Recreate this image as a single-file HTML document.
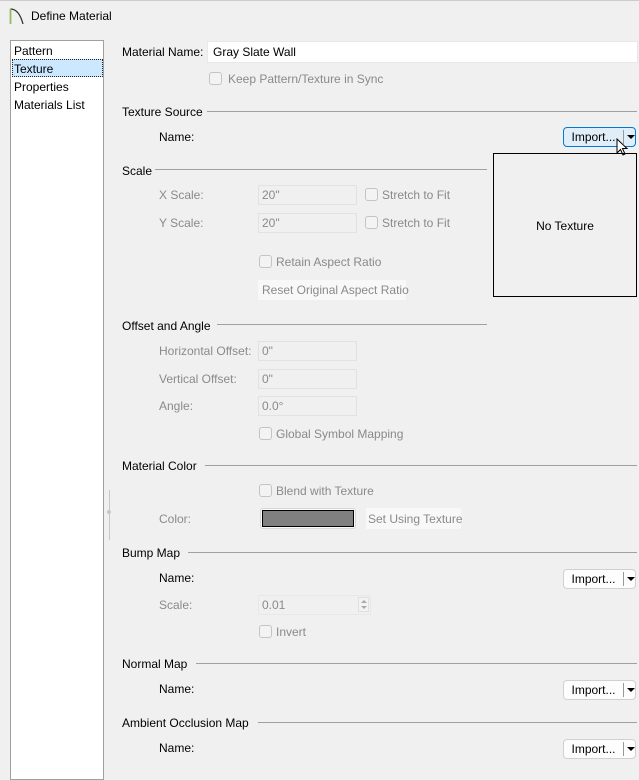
<!DOCTYPE html>
<html><head><meta charset="utf-8"><style>
*{margin:0;padding:0;box-sizing:border-box}
body{width:639px;height:763px;background:#f0f0f0;font-family:"Liberation Sans",sans-serif;font-size:12px;color:#000;position:relative;overflow:hidden}
.a{position:absolute;white-space:nowrap;line-height:16px}
.g{color:#8a8a8a}
.hl{position:absolute;height:1px;background:#a0a0a0}
.in{position:absolute;height:20px;border:1px solid #e2e2e2;background:#f0f0f0;color:#8a8a8a;padding:2px 3px;line-height:14px}
.cb{position:absolute;width:13px;height:13px;border:1px solid #c4c4c4;border-radius:3px;background:#f3f3f3}
.btn{position:absolute;height:20px;background:#fdfdfd;border:1px solid #d0d0d0;border-radius:4px;line-height:18px}
.btn .t{position:absolute;left:0;width:59px;text-align:center}
.btn .s{position:absolute;left:59px;top:2px;width:1px;height:14px;background:#999}
.btn .d{position:absolute;left:63px;top:7px;width:0;height:0;border-left:4px solid transparent;border-right:4px solid transparent;border-top:4px solid #000}
</style></head><body>
<div style="position:absolute;left:0;top:0;width:639px;height:1px;background:#ccc"></div>
<svg style="position:absolute;left:9px;top:7px" width="16" height="18"><path d="M1.5 17V2 M1.5 2 Q10 2 14 17" stroke="#333" stroke-width="1.3" fill="none"/><path d="M1.5 17V2" stroke="#8dc63f" stroke-width="1.3"/></svg>
<div class="a" style="left:31px;top:8px">Define Material</div>

<div style="position:absolute;left:10px;top:40px;width:94px;height:740px;background:#fff;border:1px solid #a0a0a0"></div>
<div style="position:absolute;left:12px;top:59px;width:91px;height:18px;background:#cce8ff;border:1px dotted #222"></div>
<div class="a" style="left:14px;top:43px">Pattern</div>
<div class="a" style="left:14px;top:61px">Texture</div>
<div class="a" style="left:14px;top:79px">Properties</div>
<div class="a" style="left:14px;top:97px">Materials List</div>

<div class="a" style="left:122px;top:44px">Material Name:</div>
<div style="position:absolute;left:207px;top:41px;width:431px;height:22px;background:#fff;border:1px solid #e8e8e8"></div>
<div class="a" style="left:213px;top:44px">Gray Slate Wall</div>
<div class="cb" style="left:209px;top:72px"></div>
<div class="a g" style="left:228px;top:71px">Keep Pattern/Texture in Sync</div>

<div class="a" style="left:122px;top:104px">Texture Source</div>
<div class="hl" style="left:207px;top:111px;width:430px"></div>
<div class="a" style="left:159px;top:129px">Name:</div>
<div class="btn" style="left:563px;top:127px;width:73px;background:#e0eefa;border-color:#0078d7"><span class="t">Import...</span><span class="s"></span><span class="d"></span></div>
<svg style="position:absolute;left:616px;top:138px" width="14" height="20"><path d="M1 1V15L4.5 11.5L7 17L9 16L6.5 10.5H11Z" fill="#fff" stroke="#000" stroke-width="1"/></svg>

<div class="a" style="left:122px;top:163px">Scale</div>
<div class="hl" style="left:155px;top:169px;width:332px"></div>
<div style="position:absolute;left:493px;top:153px;width:144px;height:144px;border:1px solid #000"></div>
<div class="a" style="left:493px;top:218px;width:144px;text-align:center">No Texture</div>

<div class="a g" style="left:159px;top:187px">X Scale:</div>
<div class="in" style="left:258px;top:185px;width:99px">20"</div>
<div class="cb" style="left:365px;top:188px"></div>
<div class="a g" style="left:382px;top:187px">Stretch to Fit</div>
<div class="a g" style="left:159px;top:215px">Y Scale:</div>
<div class="in" style="left:258px;top:213px;width:99px">20"</div>
<div class="cb" style="left:365px;top:216px"></div>
<div class="a g" style="left:382px;top:215px">Stretch to Fit</div>
<div class="cb" style="left:259px;top:255px"></div>
<div class="a g" style="left:276px;top:254px">Retain Aspect Ratio</div>
<div style="position:absolute;left:258px;top:280px;width:148px;height:20px;background:#f8f8f8"></div>
<div class="a g" style="left:262px;top:282px">Reset Original Aspect Ratio</div>

<div class="a" style="left:122px;top:318px">Offset and Angle</div>
<div class="hl" style="left:217px;top:324px;width:270px"></div>
<div class="a g" style="left:159px;top:343px">Horizontal Offset:</div>
<div class="in" style="left:258px;top:341px;width:99px">0"</div>
<div class="a g" style="left:159px;top:371px">Vertical Offset:</div>
<div class="in" style="left:258px;top:369px;width:99px">0"</div>
<div class="a g" style="left:159px;top:398px">Angle:</div>
<div class="in" style="left:258px;top:396px;width:99px">0.0°</div>
<div class="cb" style="left:259px;top:427px"></div>
<div class="a g" style="left:276px;top:426px">Global Symbol Mapping</div>

<div class="a" style="left:122px;top:458px">Material Color</div>
<div class="hl" style="left:205px;top:465px;width:432px"></div>
<div style="position:absolute;left:109px;top:490px;width:1px;height:50px;background:#c8c8c8"></div>
<div style="position:absolute;left:107px;top:510px;width:4px;height:4px;background:#c8c8c8;border-radius:2px"></div>
<div class="cb" style="left:259px;top:484px"></div>
<div class="a g" style="left:276px;top:483px">Blend with Texture</div>
<div class="a g" style="left:159px;top:511px">Color:</div>
<div style="position:absolute;left:260px;top:508px;width:96px;height:21px;border:1px solid #d8d8d8;border-radius:3px;background:#fafafa"></div>
<div style="position:absolute;left:262px;top:510px;width:92px;height:17px;border:1px solid #000;background:#808080"></div>
<div style="position:absolute;left:366px;top:508px;width:95px;height:21px;background:#f8f8f8"></div>
<div class="a g" style="left:368px;top:511px">Set Using Texture</div>

<div class="a" style="left:122px;top:545px">Bump Map</div>
<div class="hl" style="left:188px;top:552px;width:449px"></div>
<div class="a" style="left:159px;top:570px">Name:</div>
<div class="btn" style="left:563px;top:569px;width:73px"><span class="t">Import...</span><span class="s"></span><span class="d"></span></div>
<div class="a g" style="left:159px;top:597px">Scale:</div>
<div class="in" style="left:258px;top:595px;width:113px;border-color:#e8e8e8">0.01</div>
<div style="position:absolute;left:358px;top:597px;width:11px;height:15px;border:1px solid #e0e0e0;background:#f3f3f3"></div>
<div style="position:absolute;left:361px;top:600px;border-left:3px solid transparent;border-right:3px solid transparent;border-bottom:3px solid #aaa"></div>
<div style="position:absolute;left:361px;top:606px;border-left:3px solid transparent;border-right:3px solid transparent;border-top:3px solid #aaa"></div>
<div class="cb" style="left:259px;top:625px"></div>
<div class="a g" style="left:276px;top:624px">Invert</div>

<div class="a" style="left:122px;top:656px">Normal Map</div>
<div class="hl" style="left:196px;top:663px;width:441px"></div>
<div class="a" style="left:159px;top:681px">Name:</div>
<div class="btn" style="left:563px;top:680px;width:73px"><span class="t">Import...</span><span class="s"></span><span class="d"></span></div>

<div class="a" style="left:122px;top:715px">Ambient Occlusion Map</div>
<div class="hl" style="left:258px;top:722px;width:379px"></div>
<div class="a" style="left:159px;top:740px">Name:</div>
<div class="btn" style="left:563px;top:739px;width:73px"><span class="t">Import...</span><span class="s"></span><span class="d"></span></div>
</body></html>
